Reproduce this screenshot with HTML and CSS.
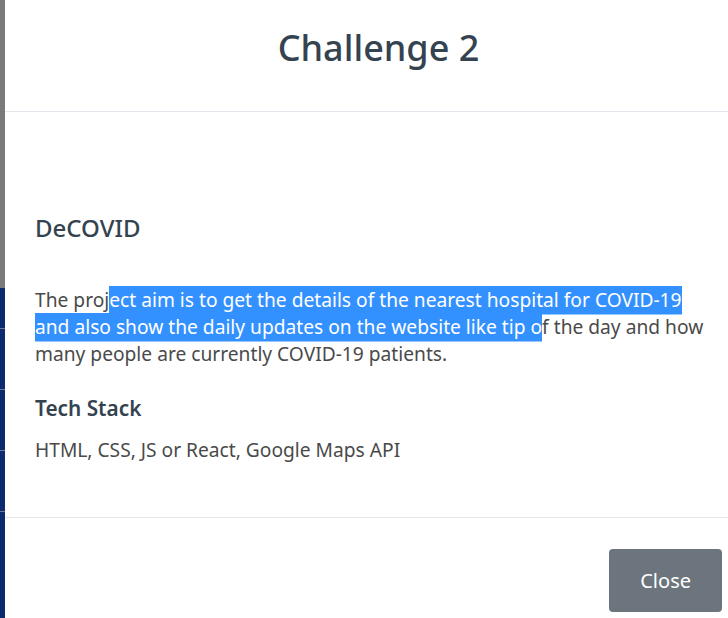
FILE: index.html
```html
<!DOCTYPE html>
<html lang="en">
<head>
<meta charset="utf-8">
<title>Challenge 2</title>
<link rel="stylesheet" href="styles.css">
</head>
<body>
<div class="page">
  <div class="strip">
    <div class="strip-top"></div>
    <div class="strip-bottom">
      <span class="tick"></span>
      <span class="tick"></span>
      <span class="tick"></span>
      <span class="tick"></span>
    </div>
  </div>
  <div class="modal">
    <header class="modal-header">
      <h2 class="modal-title">Challenge 2</h2>
    </header>
    <div class="modal-body">
      <h3 class="project-name">DeCOVID</h3>
      <p class="text desc">The proj<span class="sel">ect aim is to get the details of the nearest hospital for COVID-19 and also show the daily updates on the website like tip o</span>f the day and how many people are currently COVID-19 patients.</p>
      <h4 class="section-title">Tech Stack</h4>
      <p class="text">HTML, CSS, JS or React, Google Maps API</p>
    </div>
    <footer class="modal-footer">
      <button class="btn-close" type="button">Close</button>
    </footer>
  </div>
</div>
</body>
</html>
```
FILE: styles.css
```css
html, body {
  margin: 0;
  padding: 0;
  height: 100%;
  overflow: hidden;
  background: #ffffff;
}

body {
  font-family: "Noto Sans", "Open Sans", sans-serif;
}

.page {
  display: flex;
  height: 618px;
  width: 728px;
  overflow: hidden;
}

.strip {
  flex: 0 0 5px;
  display: flex;
  flex-direction: column;
}

.strip-top {
  height: 288px;
  background: #7a7a7a;
}

.strip-bottom {
  flex: 1;
  background: #0c2a6e;
  display: flex;
  flex-direction: column;
  gap: 60px;
  padding-top: 40px;
}

.tick {
  display: block;
  height: 1px;
  background: #6f7a94;
}

.modal {
  flex: 0 0 747px;
  background: #ffffff;
  display: flex;
  flex-direction: column;
}

.modal-header {
  padding: 26px 30px 0;
  height: 85px;
  border-bottom: 1px solid #e2e7ed;
  text-align: center;
}

.modal-title {
  margin: 0;
  font-size: 36px;
  line-height: 1.2;
  font-weight: 500;
  color: #34434f;
}

.modal-body {
  padding: 102px 37px 0 30px;
  height: 303px;
}

.project-name {
  margin: 0 0 43px;
  font-size: 24px;
  line-height: 1.2;
  font-weight: 500;
  color: #34434f;
}

.text {
  margin: 0;
  font-size: 19.2px;
  line-height: 27px;
  color: #4a4a4a;
}

.desc {
  margin-bottom: 29px;
}

.sel {
  background: #3390ff;
  color: #ffffff;
  box-shadow: 0 1.5px 0 #3390ff;
}

.section-title {
  margin: 0 0 15.7px;
  font-size: 20.8px;
  line-height: 1.2;
  font-weight: 600;
  color: #34434f;
}

.modal-footer {
  border-top: 1px solid #e2e7ed;
  padding: 31px 30px 0;
  display: flex;
  justify-content: flex-end;
}

.btn-close {
  font-family: "Noto Sans", "Open Sans", sans-serif;
  font-size: 20px;
  line-height: 30px;
  padding: 16.5px 31px;
  border: none;
  border-radius: 4px;
  background: #6c757d;
  color: #ffffff;
}
```
